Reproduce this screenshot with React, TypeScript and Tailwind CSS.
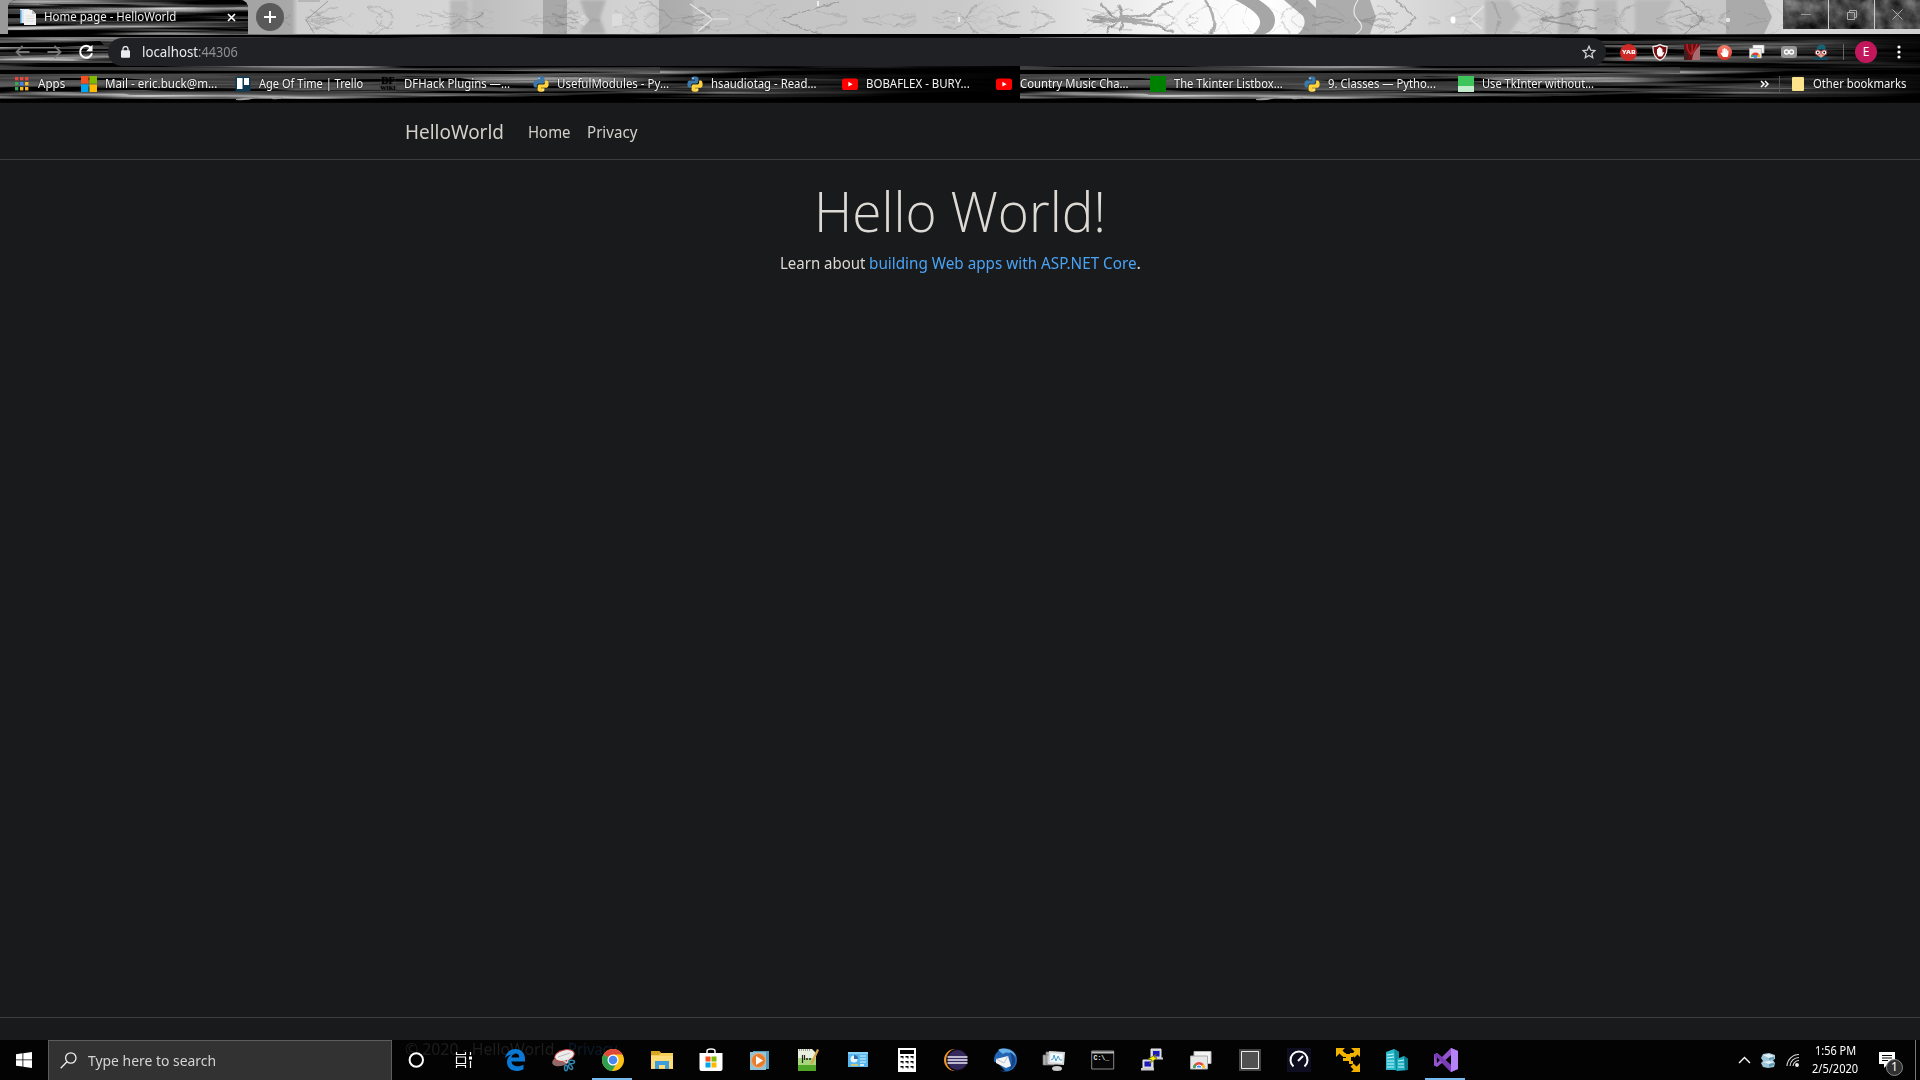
import React, { useLayoutEffect, useRef, useState } from 'react';
import { FaHandPaper } from 'react-icons/fa';

/** Text squeezed or stretched horizontally to an exact width. */
function Fit({ w, className = '', children }: { w: number; className?: string; children: React.ReactNode }) {
  const ref = useRef<HTMLSpanElement>(null);
  const [scale, setScale] = useState(1);
  useLayoutEffect(() => {
    if (ref.current) setScale(w / ref.current.offsetWidth);
  }, [w]);
  return (
    <span className={`inline-block shrink-0 whitespace-nowrap ${className}`} style={{ width: w }}>
      <span ref={ref} className="inline-block origin-left whitespace-nowrap" style={{ transform: `scaleX(${scale})` }}>
        {children}
      </span>
    </span>
  );
}

function makeRandom(seed: number) {
  let s = seed;
  return () => {
    s = (s * 16807) % 2147483647;
    return s / 2147483647;
  };
}

const rnd = makeRandom(4219);
const STREAKS = Array.from({ length: 90 }, (_, i) => {
  const x = rnd() * 1020 - 100;
  const y = rnd() * 104;
  const len = 70 + rnd() * 260;
  const h = 1 + rnd() * 2.6;
  const bend = (rnd() - 0.5) * 4;
  const shades = ['#000', '#4f4f4f', '#000', '#464646', '#5c5c5c', '#333'];
  return {
    d: `M${x.toFixed(1)} ${y.toFixed(1)}q${(len / 2).toFixed(1)} ${(bend - h).toFixed(1)} ${len.toFixed(1)} ${(bend / 2).toFixed(1)}q${(-len / 2).toFixed(1)} ${(h + 1).toFixed(1)} ${(-len).toFixed(1)} ${(-bend / 2).toFixed(1)}z`,
    fill: shades[i % 6],
    o: 0.5 + rnd() * 0.4,
  };
});

function Wood() {
  return (
    <svg className="absolute inset-0 h-full w-full" viewBox="0 0 1920 104" preserveAspectRatio="none">
      <defs>
        <filter id="grain" x="0" y="0" width="1" height="1" colorInterpolationFilters="sRGB">
          <feTurbulence type="fractalNoise" baseFrequency=".0045 .16" numOctaves="3" seed="11" />
          <feColorMatrix values="1.9 0 0 0 -.77 1.9 0 0 0 -.77 1.9 0 0 0 -.77 0 0 0 0 1" />
        </filter>
        <linearGradient id="wood-fade">
          <stop offset=".6" stopColor="#000" stopOpacity="0" />
          <stop offset=".9" stopColor="#000" stopOpacity=".9" />
          <stop offset="1" stopColor="#000" />
        </linearGradient>
        <g id="wood-tile">
          <rect width="1020" height="104" fill="#222" />
          <rect width="1020" height="104" filter="url(#grain)" />
          {STREAKS.map((s, i) => (
            <path key={i} d={s.d} fill={s.fill} opacity={s.o} />
          ))}
          <path d="M0 67h150l280 1 230-1v6l-100 3-100 1-60-1 60 8 60 5-90 2-220-3-210-2z" fill="#4a4a4a" opacity=".75" />
          <path d="M0 82h130l80 2 200-2-60 3H0zM120 92l150-1 260 3-180 2-220-1z" fill="#5a5a5a" opacity=".7" />
          <path d="M0 70h60l220 1 110-1 250 2-130 2-190-1-320 1zM60 78h60l30 2H60zM300 80l160-2 20 3-160 1zM0 88h90l50 2H0zM0 99h300l200-2 130 2 390-2v7H0zM0 35h400l620-1v3H0zM0 43h70l30-2 4 4-44 2H0z" fill="#000" />
          <path d="M0 61h120v2H0zM60 47h50v2H60z" fill="#444" />
          <path d="M236 99q12-2 19-1-8 3-19 2zM272 98q10-2 12-1-4 3-12 2z" fill="#999" />
          <rect y="34" width="1020" height="70" fill="url(#wood-fade)" />
        </g>
      </defs>
      <use href="#wood-tile" />
      <svg x="1020" width="900" height="104" viewBox="0 0 900 104">
        <use href="#wood-tile" />
      </svg>
      <rect y="102" width="1920" height="2" fill="#050505" />
    </svg>
  );
}

const trees = makeRandom(77);
const BRANCHES = Array.from({ length: 110 }, () => {
  const x = 290 + trees() * 1490;
  const w = (8 + trees() * 26) * (trees() > 0.5 ? 1 : -1);
  const y = 1 + trees() * 17;
  const c = 5 - trees() * 10;
  return {
    d: `M${x.toFixed(0)} ${(20 - y).toFixed(1)}q${(w * 0.4).toFixed(1)} ${c.toFixed(1)} ${w.toFixed(1)} ${(y - 1).toFixed(1)}M${x.toFixed(0)} ${(20 + y).toFixed(1)}q${(w * 0.4).toFixed(1)} ${(-c).toFixed(1)} ${w.toFixed(1)} ${(1 - y).toFixed(1)}`,
    sw: 0.5 + trees() * 1.2,
    o: 0.1 + trees() * 0.2,
  };
});

function Forest() {
  return (
    <svg className="absolute inset-0 h-full w-full" viewBox="0 0 1920 34" preserveAspectRatio="none">
      <defs>
        <linearGradient id="sky">
          <stop offset="0" stopColor="#999" />
          <stop offset=".14" stopColor="#a5a5a5" />
          <stop offset=".152" stopColor="#a9a9a9" />
          <stop offset=".155" stopColor="#cfcfcf" />
          <stop offset=".24" stopColor="#d6d6d6" />
          <stop offset=".247" stopColor="#bdbdbd" />
          <stop offset=".28" stopColor="#c8c8c8" />
          <stop offset=".335" stopColor="#d4d4d4" />
          <stop offset=".343" stopColor="#cacaca" />
          <stop offset=".3431" stopColor="#ababab" />
          <stop offset=".36" stopColor="#b0b0b0" />
          <stop offset=".362" stopColor="#c2c2c2" />
          <stop offset=".5" stopColor="#c9c9c9" />
          <stop offset=".55" stopColor="#dcdcdc" />
          <stop offset=".6" stopColor="#f3f3f3" />
          <stop offset=".66" stopColor="#fff" />
          <stop offset=".72" stopColor="#dedede" />
          <stop offset=".765" stopColor="#d0d0d0" />
          <stop offset=".9" stopColor="#c6c6c6" />
          <stop offset=".93" stopColor="#d8d8d8" />
          <stop offset="1" stopColor="#cfcfcf" />
        </linearGradient>
        <filter id="mist"><feGaussianBlur stdDeviation="1.4" /></filter>
        <filter id="twist" x="0" y="-.2" width="1" height="1.4">
          <feTurbulence type="fractalNoise" baseFrequency=".09" numOctaves="2" seed="3" result="n" />
          <feDisplacementMap in="SourceGraphic" in2="n" scale="7" xChannelSelector="R" yChannelSelector="G" />
          <feGaussianBlur stdDeviation=".35" />
        </filter>
      </defs>
      <rect width="1920" height="34" fill="url(#sky)" />
      <g filter="url(#mist)" fill="#a6a6a6">
        <rect x="450" width="18" height="34" fill="#b9b9b9" />
        <path d="M580 0h26l-6 18 6 16h-26l6-16zM1560 0h20l-7 17 7 17h-22z" fill="#b0b0b0" />
        <path d="M1635 0h38l-10 17 10 17h-38zM1485 0h24l12 17-12 17h-24zM1595 0h22v34h-22z" fill="#b8b8b8" />
      </g>
      <rect x="543" width="24" height="34" fill="#a8a8a8" />
      <path d="M1726 0h38l8 17-8 17h-38z" fill="#aaa" />
      <path d="M1235 0h24q16 10 16 20t-10 14h-12q10-8 6-16t-24-18zM1284 0h24l8 8v26h-18q10-9 5-18z" fill="#a6a6a6" />
      <path d="M1316 0h54l6 17-6 17h-54z" fill="#acacac" />
      <g fill="none" stroke="#666" filter="url(#twist)">
        <path d="M0-6h1920M0 40h1920" stroke="none" />
        {BRANCHES.map((b, i) => (
          <path key={i} d={b.d} strokeWidth={b.sw} opacity={b.o} />
        ))}
        <path d="M1086 20h66M1092 16l26 4-26 3M1102 2l8 12 10 6-12 12M1120 18l28-3 24-14M1122 21l30 3 22 8M1118 4q8 12 2 28M1205 0q14 20 5 34" strokeWidth="2.400" opacity=".5" />
        <path d="M1396 0l20 18-20 16M1540 20l58-12M1540 20l58 9M1680 0l22 20-20 14M780 19l60-18M782 21l40 13" strokeWidth="1.300" opacity=".45" />
      </g>
      <path d="M320 1l-22 0M328 1l-22 19 8 13" fill="none" stroke="#888" opacity=".8" strokeWidth=".9" />
      <path d="M1484 6l-14 13 12 10M690 4l22 15h16M712 20l-14 11M1358 0q-8 12 0 20t-2 14" fill="none" stroke="#e6e6e6" strokeWidth="1.200" />
      <path d="M584 14l6 6-6 6-8-6zM612 14h10v12h-10z" fill="#e8e8e8" opacity=".5" />
      <ellipse cx="1453" cy="20" rx="2.500" ry="3.500" fill="#fff" />
      <circle cx="1728" cy="20" r="2.200" fill="#e6e6e6" />
      <path d="M818 1v5M959 17v5" stroke="#fff" strokeWidth="1.400" />
    </svg>
  );
}

const Python = () => (
  <svg width="16" height="16" viewBox="0 0 16 16">
    <path d="M7.800.4C4.400.4 4.600 1.800 4.600 1.800v2h3.500v.6H2.800S.4 4.100.4 7.900s2.100 3.600 2.100 3.600h1.400V9.600s-.1-2.100 2.100-2.100h3.400s2 0 2-1.900V2.400S11.700.4 7.800.4z" fill="#3b78ab" />
    <path d="M8.200 15.700c3.400 0 3.200-1.500 3.200-1.500v-1.900H8v-.5h5.200s2.400.2 2.400-3.600-2.100-3.600-2.100-3.600h-1.400v1.900s.1 2.100-2.100 2.100H6.600s-2 0-2 1.900v3.200s-.3 2 3.600 2z" fill="#ffd43b" />
    <circle cx="6" cy="2.200" r=".7" fill="#fff" /><circle cx="10" cy="13.900" r=".7" fill="#fff" />
  </svg>
);
const YouTube = () => (
  <svg width="16" height="16" viewBox="0 0 16 16"><rect y="2.500" width="16" height="11.500" rx="2.600" fill="#f00" /><path d="M6.400 5.800v4.800l4.200-2.400z" fill="#fff" /></svg>
);
const Apps = () => (
  <svg width="14" height="14" viewBox="0 0 14 14">
    {['#e8453c', '#e8453c', '#e8453c', '#34a853', '#4285f4', '#f9bb2d', '#34a853', '#f9bb2d', '#f9bb2d'].map((c, i) => (
      <rect key={i} x={(i % 3) * 5} y={Math.floor(i / 3) * 5} width="3.400" height="3.400" fill={c} />
    ))}
  </svg>
);
const Microsoft = () => (
  <svg width="16" height="16" viewBox="0 0 16 16"><path d="M0 0h7.600v7.600H0z" fill="#f25022" /><path d="M8.400 0H16v7.600H8.400z" fill="#7fba00" /><path d="M0 8.400h7.600V16H0z" fill="#00a4ef" /><path d="M8.400 8.400H16V16H8.400z" fill="#ffb900" /></svg>
);
const Trello = () => (
  <svg width="16" height="16" viewBox="0 0 16 16"><rect x=".5" y=".5" width="15" height="15" rx="2" fill="#0c3953" /><path d="M2 2h5.500v11H2zM9 2h5v7H9z" fill="#fff" /></svg>
);
const Df = () => (
  <div className="flex h-4 w-4 flex-col items-center bg-white/5 font-['Liberation_Serif'] text-[10px] font-bold leading-[9px] text-black">
    <span>DF</span><span className="text-[6px] leading-[6px]">WIKI</span>
  </div>
);

const BOOKMARKS: { icon: React.ReactNode; label: string; w: number; slot: string }[] = [
  { icon: <Microsoft />, label: 'Mail - eric.buck@m...', w: 112, slot: 'w-[154px]' },
  { icon: <Trello />, label: 'Age Of Time | Trello', w: 104, slot: 'w-[145px]' },
  { icon: <Df />, label: 'DFHack Plugins —...', w: 106, slot: 'w-[153px]' },
  { icon: <Python />, label: 'UsefulModules - Py...', w: 112, slot: 'w-[154px]' },
  { icon: <Python />, label: 'hsaudiotag - Read...', w: 106, slot: 'w-[155px]' },
  { icon: <YouTube />, label: 'BOBAFLEX - BURY...', w: 104, slot: 'w-[154px]' },
  { icon: <YouTube />, label: 'Country Music Cha...', w: 109, slot: 'w-[154px]' },
  { icon: <div className="h-4 w-4 bg-[#008000]" />, label: 'The Tkinter Listbox...', w: 109, slot: 'w-[154px]' },
  { icon: <Python />, label: '9. Classes — Pytho...', w: 108, slot: 'w-[154px]' },
  { icon: <div className="h-4 w-4 border-b-[6px] border-[#c3ecce] bg-[#3dc55c]" />, label: 'Use TkInter without...', w: 112, slot: 'w-[154px]' },
];

function TabStrip() {
  return (
    <div className="relative flex h-[34px] overflow-hidden">
      <div className="absolute inset-0"><Forest /></div>
      <div className="relative ml-2 flex h-[34px] w-[240px] items-center overflow-hidden rounded-t-lg pl-3">
        <div className="absolute -left-2 top-0 h-[104px] w-[1920px]"><Wood /></div>
        <svg className="relative" width="16" height="16" viewBox="0 0 16 16">
          <path d="M0 0h9l2 2v12H0z" fill="#d5e7f2" /><path d="M0 1h1.500v13H0z" fill="#5b9fcd" /><path d="M4 1h8l4 4v11H4z" fill="#f2f2f2" /><path d="M12 1v4h4z" fill="#bbb" /><path d="M6 7h8M6 9.500h8M6 12h8" stroke="#dcdcdc" />
        </svg>
        <Fit w={132} className="relative ml-2 text-[12px] leading-4 text-[#eee]">Home page - HelloWorld</Fit>
        <svg className="relative ml-[51px]" width="9" height="9" viewBox="0 0 9 9"><path d="M1 1l7 7M8 1L1 8" stroke="#fff" strokeWidth="1.700" /></svg>
      </div>
      <div className="relative ml-2 mt-[3px] flex h-7 w-7 items-center justify-center rounded-full bg-[#5a5a5a]">
        <svg width="12" height="12" viewBox="0 0 12 12"><path d="M6 0v12M0 6h12" stroke="#fff" strokeWidth="2" /></svg>
      </div>
      <div className="relative ml-auto flex h-[29px] w-[137px] bg-[#484848]">
        <svg className="absolute inset-0" width="137" height="29">
          <defs><filter id="grit" x="0" y="0" width="1" height="1" colorInterpolationFilters="sRGB"><feTurbulence type="fractalNoise" baseFrequency=".06" numOctaves="5" seed="5" /><feColorMatrix values=".6 0 0 0 -.02 .6 0 0 0 -.02 .6 0 0 0 -.02 0 0 0 0 1" /></filter></defs>
          <rect width="137" height="29" filter="url(#grit)" />
        </svg>
        <div className="relative flex w-[46px] items-center justify-center border-r border-[#ccc]"><div className="h-px w-[10px] bg-[#999]" /></div>
        <div className="relative flex w-[46px] items-center justify-center border-r border-[#ccc]">
          <svg width="10" height="10" viewBox="0 0 10 10" fill="none" stroke="#aaa"><path d="M.5 2.500h7v7h-7zM2.500 2.500v-2h7v7h-2" /></svg>
        </div>
        <div className="relative flex w-[45px] items-center justify-center">
          <svg width="11" height="11" viewBox="0 0 11 11"><path d="M.5.5l10 10M10.500.5l-10 10" stroke="#aaa" /></svg>
        </div>
      </div>
    </div>
  );
}

function Extensions() {
  return (
    <div className="ml-[14px] flex items-center">
      <div className="flex w-8 items-center"><div className="flex h-[17px] w-[17px] items-center justify-center rounded-full bg-[#cf2a27] text-[6px] font-extrabold text-white"><Fit w={14}>YAB</Fit></div></div>
      <div className="flex w-8">
        <svg width="16" height="17" viewBox="0 0 16 17"><path d="M8 .6q3.500 1.800 7 2c.3 7-1.600 10.900-7 13.700C2.600 13.500.7 9.600 1 2.600q3.500-.2 7-2z" fill="#7a0e10" stroke="#eee" strokeWidth="1.200" /><path d="M5 8V5h1V3.800h1.200V3h1.200v1h1.200v1.200h.9V9l1-1 .8.600L10 12.500H6.500L5 10z" fill="#fff" /></svg>
      </div>
      <div className="flex w-[33px]">
        <svg width="16" height="16" viewBox="0 0 16 16"><path d="M0 0h16v16H0z" fill="#6b0f12" /><path d="M0 5l4 5-1 6H0z" fill="#382020" /><path d="M3 0q0 7 4 10M8 0q1 6-1 11M13 0q-2 7-6 11" stroke="#b5262a" strokeWidth="1.400" fill="none" /><path d="M16 1v15H8q0-7 8-15z" fill="#a66d70" /></svg>
      </div>
      <div className="flex w-8"><div className="flex h-[15px] w-[15px] items-center justify-center rounded-full bg-gradient-to-b from-[#f58070] to-[#d6291e] text-white"><FaHandPaper size={9} /></div></div>
      <div className="flex w-8">
        <svg width="16" height="14" viewBox="0 0 16 14"><path d="M4 0h11v8H4z" fill="#f8f8f8" stroke="#bbb" strokeWidth=".7" /><path d="M.4 3.500h12V13H.4z" fill="#eee" stroke="#aaa" strokeWidth=".7" /><path d="M2 12a4.500 4.500 0 0 1 9 0z" fill="#e33b2e" /><path d="M2 12a4.500 4.500 0 0 1 1-3l3 3z" fill="#3cab55" /><path d="M11 12a4.500 4.500 0 0 0-1-3L7 12z" fill="#fbc116" /><circle cx="6.500" cy="11.500" r="1.800" fill="#4285f4" /></svg>
      </div>
      <div className="flex w-8">
        <svg width="16" height="12" viewBox="0 0 16 12"><rect width="16" height="12" rx="3" fill="#969696" /><circle cx="5.500" cy="6" r="2" fill="none" stroke="#fff" strokeWidth="1.300" /><circle cx="10.500" cy="6" r="2" fill="none" stroke="#fff" strokeWidth="1.300" /></svg>
      </div>
      <svg width="16" height="16" viewBox="0 0 16 16"><path d="M4 6C3 2 6 .5 9 .5s4 2 3.500 5.500z" fill="#176273" /><path d="M2 5h12v1.500H2z" fill="#0c4454" /><path d="M4 7h8v4l-4 3-4-3z" fill="#e3a58e" /><circle cx="4.800" cy="8.500" r="2.600" fill="#fff" stroke="#b33b34" strokeWidth="1" /><circle cx="11.200" cy="8.500" r="2.600" fill="#fff" stroke="#b33b34" strokeWidth="1" /><circle cx="4.800" cy="8.500" r=".9" /><circle cx="11.200" cy="8.500" r=".9" /><path d="M1 16c0-3 3-4 5-3l2 1 2-1c3-1 5 0 5 3z" fill="#134c60" /></svg>
    </div>
  );
}

function Toolbar() {
  return (
    <div className="relative flex h-9 items-center">
      <svg className="ml-[15px]" width="15" height="14" viewBox="0 0 15 14" fill="none" stroke="#777" strokeWidth="1.800"><path d="M14.500 7H1.500M7.500 1l-6 6 6 6" /></svg>
      <svg className="ml-[17px]" width="15" height="14" viewBox="0 0 15 14" fill="none" stroke="#777" strokeWidth="1.800"><path d="M.5 7h13M7.500 1l6 6-6 6" /></svg>
      <svg className="ml-[16px]" width="16" height="16" viewBox="0 0 16 16"><path d="M12.800 4A6 6 0 1 0 14 9.300" fill="none" stroke="#fff" strokeWidth="2" /><path d="M14.500.8v6.400H8.200z" fill="#fff" /></svg>
      <div className="ml-[14px] flex h-7 w-[1498px] items-center rounded-full bg-[#202124]">
        <svg className="ml-[13px]" width="9" height="12" viewBox="0 0 9 12"><path d="M2 5V3a2.500 2.500 0 0 1 5 0v2" fill="none" stroke="#e8eaed" strokeWidth="1.300" /><rect y="4.300" width="9" height="7.500" rx="1" fill="#e8eaed" /></svg>
        <Fit w={56} className="ml-3 text-[14px] leading-5 text-[#e8eaed]">localhost</Fit>
        <Fit w={40} className="text-[14px] leading-5 text-[#8d9094]">:44306</Fit>
        <svg className="ml-auto mr-[10px]" width="14" height="14" viewBox="0 0 14 14"><path d="M7 1.200l1.700 4 4.300.4-3.200 2.900.9 4.200L7 10.500l-3.700 2.200.9-4.200L1 5.600l4.300-.4z" fill="none" stroke="#d0d1d3" strokeWidth="1.300" /></svg>
      </div>
      <Extensions />
      <div className="ml-[14px] h-4 w-px bg-[#666]" />
      <div className="ml-[11px] flex h-[22px] w-[22px] items-center justify-center rounded-full bg-[#c2185b] text-[12px] text-white">E</div>
      <svg className="ml-5" width="4" height="14" viewBox="0 0 4 14" fill="#fff"><circle cx="2" cy="2" r="1.600" /><circle cx="2" cy="7" r="1.600" /><circle cx="2" cy="12" r="1.600" /></svg>
    </div>
  );
}

function BookmarksBar() {
  return (
    <div className="relative flex h-[28px] items-center text-[12px] leading-4 text-[#f5f5f5] [text-shadow:0_0_2px_#000]">
      <div className="ml-[15px] flex w-[66px] items-center gap-[9px]"><Apps /><Fit w={27}>Apps</Fit></div>
      {BOOKMARKS.map((b) => (
        <div key={b.label} className={`flex shrink-0 items-center gap-2 ${b.slot}`}>{b.icon}<Fit w={b.w}>{b.label}</Fit></div>
      ))}
      <svg className="ml-auto" width="9" height="8" viewBox="0 0 9 8" fill="none" stroke="#fff" strokeWidth="1.500"><path d="M1 1l3 3-3 3M5 1l3 3-3 3" /></svg>
      <div className="ml-[10px] h-4 w-px bg-[#555]" />
      <div className="ml-3 h-[14px] w-3 rounded-[1px] bg-[#fce28a]" />
      <Fit w={93} className="ml-[9px] mr-[14px]">Other bookmarks</Fit>
    </div>
  );
}

const I = ({ children, w = 24, h = 24 }: { children: React.ReactNode; w?: number; h?: number }) => (
  <svg width={w} height={h} viewBox={`0 0 ${w} ${h}`}>{children}</svg>
);

const ChromeIcon = () => (
  <I><circle cx="12" cy="12" r="11" fill="#fbc116" /><path d="M12 12L2.500 6.500A11 11 0 0 1 21.500 6.500H12z" fill="#e0483b" /><path d="M12 12L2.500 6.500A11 11 0 0 0 11 23l5-8.500z" fill="#2f9e4f" /><circle cx="12" cy="12" r="5.500" fill="#fff" /><circle cx="12" cy="12" r="4.300" fill="#4a86ef" /></I>
);

const TASKS: { active?: boolean; icon: React.ReactNode }[] = [
  { icon: <I><circle cx="11.300" cy="12" r="6.700" fill="none" stroke="#fff" strokeWidth="2" /></I> },
  { icon: <I><path d="M2.500 4v2.500h9V4M2.500 20v-2.500h9V20M2.500 9h9v6.500h-9zM16.500 4v3M16.500 13v7" fill="none" stroke="#fff" strokeWidth="1.200" /><path d="M15 8.500h3v3h-3z" fill="#fff" /></I> },
  { icon: <I><path d="M2 10.500C3 4.500 7 1 12.500 1 18.500 1 22 5.500 22 10.500V13.500H8.500c.4 3.300 3 4.700 6 4.700 2.300 0 4.500-.6 6-1.500v4.500c-2 1.200-4.500 1.800-7 1.800C7.500 23 4 19 4 14c0-3.500 1.800-6 4.500-7.500C5.500 7 3.500 8.500 2 10.500zM8.500 9.500h7.700c0-2.500-1.200-4-3.500-4s-4 1.700-4.200 4z" fill="#0b78d4" /></I> },
  { icon: <I><ellipse cx="9" cy="13" rx="9" ry="5" transform="rotate(-14 9 13)" fill="#8f6868" /><ellipse cx="12.500" cy="7.500" rx="10" ry="5.500" transform="rotate(-14 12.500 7.500)" fill="#ececec" stroke="#c94040" strokeWidth="1" /><path d="M6 9l12-4" stroke="#bbb" /><path d="M9 11l6 4M17 9l-2 6" stroke="#ddd" strokeWidth="1.300" /><g fill="none" stroke="#3185ae" strokeWidth="1.500"><ellipse cx="19.500" cy="14" rx="3" ry="1.700" /><ellipse cx="18.500" cy="19" rx="1.600" ry="2.700" transform="rotate(-35 18.500 19)" /><ellipse cx="14" cy="20" rx="1.500" ry="2.700" /></g></I> },
  { active: true, icon: <ChromeIcon /> },
  { icon: <I><path d="M1 3h8l2 2h12v16H1z" fill="#f5ce5c" /><path d="M1 3h8l2 2-2 2H1z" fill="#d9a520" /><path d="M1 8h22v12H1z" fill="#fbdc78" /><path d="M5 21v-8h14v8h-4v-4H9v4z" fill="#3e9edb" /></I> },
  { icon: <I><path d="M8 5V3q0-2 4-2t4 2v2" fill="none" stroke="#fff" strokeWidth="1.500" /><path d="M.5 5h23v16q0 2-2 2h-19q-2 0-2-2z" fill="#fff" /><path d="M6.500 8.500h5v5h-5z" fill="#f25022" /><path d="M12.500 8.500h5v5h-5z" fill="#7fba00" /><path d="M6.500 14.500h5v5h-5z" fill="#00a4ef" /><path d="M12.500 14.500h5v5h-5z" fill="#ffb900" /></I> },
  { icon: <I><path d="M5 3h16v18H5z" fill="#5a9bbd" /><path d="M2 4h16v18H2z" fill="#8ec3d8" /><circle cx="10.500" cy="12.500" r="7" fill="#e97b2c" stroke="#f3ad75" /><path d="M8 8v9l7-4.500z" fill="#fff" /></I> },
  { icon: <I><path d="M1 1h14l4 4v18H1z" fill="#e8efdc" /><path d="M1 15h18v8H1z" fill="#4fa528" /><path d="M1 10h18v7H1z" fill="#a6d87b" /><path d="M2 2h12" stroke="#888" strokeDasharray="1 1" strokeWidth="1.500" /><path d="M5.500 7v8M7.500 7v5" stroke="#222" strokeWidth="1.200" /><path d="M9 11h2M12 11h2" stroke="#222" strokeWidth="1.500" /><path d="M20 1l-6 13-1 4 3-3L22 2z" fill="#d9a34a" /></I> },
  { icon: <I><path d="M2 4h20v15H2z" fill="#55b7ed" /><path d="M2 4h20v2H2z" fill="#89d3f8" /><circle cx="8" cy="11" r="3.500" fill="#e8f5ff" /><path d="M8 11V7a4 4 0 0 1 4 4z" fill="#326ca8" /><path d="M14 8h6M14 11h6M14 14h6" stroke="#dff3ff" /><path d="M5 17h7" stroke="#f2cd52" strokeWidth="1.500" /><path d="M14 17h4" stroke="#fff" strokeWidth="1.500" /></I> },
  { icon: <I><path d="M3 0h18v24H3z" fill="#fff" /><path d="M5 2h14v4H5z" />{[9, 14, 19].map((y) => [5.5, 10.5, 15.5].map((x) => <path key={`${x}${y}`} d={`M${x} ${y - 1}h3v2.500h-1v-1h-2z`} />))}</I> },
  { icon: <I><circle cx="11" cy="12" r="11" fill="#f1942a" /><circle cx="13.500" cy="12" r="11.300" fill="#0a0710" /><circle cx="13.500" cy="12" r="10" fill="#35285c" /><path d="M3.500 9h20M3.500 12h20M3.500 15h20" stroke="#eae7f4" strokeWidth="1.600" /></I> },
  { icon: <I><circle cx="12.500" cy="12" r="11.500" fill="#2165b3" /><path d="M5 2c7-4 17 1 18 7-3-4-9-6-13-3z" fill="#69b2e7" /><path d="M17 4c7 4 7 13-1 18 3-5 4-10 1-18z" fill="#174183" /><path d="M0 14l4 0 8 9q-10 0-12-9z" fill="#030303" /><path d="M3 11l12-3 3 10-5 2-10-5z" fill="#f3f4f6" /><path d="M3 11l8 4 4-7" fill="none" stroke="#bdc4cf" /></I> },
  { icon: <I><path d="M1 7h11v10H1zM4 4h10v12H4z" fill="#b0b2b3" stroke="#777" strokeWidth=".7" /><path d="M7 3l16 1-1 13-16-1z" fill="#d7d9da" /><path d="M8.500 5l12.500 1-1 9-12-1z" fill="#f2fafd" /><path d="M9 12l2-1 1-4 2 6 2-5 2 4h2" fill="none" stroke="#4ba0cb" /><ellipse cx="15" cy="20.500" rx="5" ry="2.500" fill="#ccc" /></I> },
  { icon: <I><path d="M.7 3h22v18H.7z" fill="#060606" stroke="#888" /><path d="M1 3.500h22v2H1z" fill="#bbb" /><text x="2.500" y="12" fill="#eee" fontFamily="Liberation Mono" fontWeight="bold" fontSize="6.500">C:\_</text></I> },
  { icon: <I><path d="M11 1h10v9H11zM3 12h10v8H3z" fill="#ccc" stroke="#eee" /><path d="M13 3h6.500v5.500H13zM4.500 13.500H11v5H4.500z" fill="#1919c4" /><path d="M11 9.500h12v2H11zM1 20h13v2.500H1z" fill="#ccc" /><path d="M17 6l-9 5 4 1-3 4 8-6-3-1z" fill="#f8f000" stroke="#555000" strokeWidth=".6" /></I> },
  { icon: <I><path d="M5 3.500h17v12H5z" fill="#f4f4f4" stroke="#b5b5b5" /><path d="M1.500 8h17v13h-17z" fill="#e7e7e7" stroke="#aaa" /><path d="M4 20a6 6 0 0 1 12 0z" fill="#e44b3f" /><path d="M4 20a6 6 0 0 1 1.500-4l4.500 4z" fill="#38a655" /><path d="M16 20a6 6 0 0 0-1.500-4L10 20z" fill="#fbc116" /><path d="M7 20a3 3 0 0 1 6 0z" fill="#4285f4" stroke="#fff" /></I> },
  { icon: <I><path d="M1 1h22v22H1z" fill="#424242" /><path d="M3.500 3.500h17v17h-17z" fill="#505050" stroke="#eee" /></I> },
  { icon: <I><path d="M0 0h24v24H0z" fill="#0d0e20" /><path d="M6.500 18.500a8.500 8.500 0 1 1 11 0" fill="none" stroke="#fff" strokeWidth="2" /><path d="M11 13l5-5" stroke="#fff" strokeWidth="2" /></I> },
  { icon: <I><g fill="#f2b200"><path d="M0 0h9L6.500 2.500l3 3-3 3-3-3L0 9zM24 0v9l-2.500-2.500-3 3-3-3 3-3L15 0zM24 24h-9l2.500-2.500-3-3 3-3 3 3L24 15z" /><path d="M7 5h3v1h4V5h3v4h-2v4h2v3h-4v-3H7v-3h3V9H7z" /></g></I> },
  { icon: <I><path d="M1 4l8-3 5 3v18H1z" fill="#28b9cb" /><path d="M9 1l5 3v18l-3 1z" fill="#128f9f" /><path d="M2 7l7-1M2 10l7-1M2 13h7M2 16h7M2 19h7" stroke="#caf8fc" strokeWidth="1.200" /><path d="M12 11l7-3 4 3v11l-11 1z" fill="#1fafc1" /><path d="M19 8l4 3v11h-3z" fill="#087886" /><path d="M13 13l6-1M13 16h6M13 19h6" stroke="#caf8fc" /></I> },
  { active: true, icon: <I><path d="M17 0l7 3v18l-7 3-9-9-5 4-3-1.500v-11L3 5l5 4zM17 7l-5.500 5 5.500 5zM3 9v6l3-3z" fill="#9255cb" fillRule="evenodd" /><path d="M17 0l7 3v18l-7 3z" fill="#b583f5" /><path d="M0 6.500L3 5l14 12v7L3 9v6z" fill="#7a3cb5" /></I> },
];

function Taskbar() {
  return (
    <div className="relative flex h-10 w-full shrink-0 bg-[#030303]">
      <div className="absolute left-[405px] top-[-3px] text-[16px] leading-6 text-[#1d1d1f]">
        <Fit w={163}>© 2020 - HelloWorld -&nbsp;</Fit><Fit w={49} className="text-[#0b1b2a]">Privacy</Fit>
      </div>
      <div className="flex w-12 items-center justify-center">
        <svg width="16" height="16" viewBox="0 0 16 16" fill="#fff"><path d="M0 2.200l6.500-.9v6.200H0zM7.300 1.200L16 0v7.500H7.300zM0 8.300h6.500v6.300L0 13.700zM7.300 8.300H16V16l-8.700-1.200z" /></svg>
      </div>
      <div className="flex w-[344px] items-center border border-b-0 border-[#5c5c5c] bg-[#323232]">
        <svg className="ml-[11px]" width="17" height="17" viewBox="0 0 17 17"><circle cx="10.800" cy="6" r="5.200" fill="none" stroke="#eee" strokeWidth="1.300" /><path d="M7 9.700L.7 16.200" stroke="#eee" strokeWidth="1.300" /></svg>
        <Fit w={128} className="mb-0.5 ml-[11px] text-[15px] leading-5 text-[#d4d4d4]">Type here to search</Fit>
      </div>
      {TASKS.map((t, i) => (
        <div key={i} className="relative flex w-[49px] shrink-0 items-center justify-center">
          {t.icon}
          {t.active && <div className="absolute bottom-0 left-1 h-0.5 w-10 bg-[#76b9ed]" />}
        </div>
      ))}
      <div className="ml-auto flex items-center text-white">
        <svg width="13" height="8" viewBox="0 0 13 8"><path d="M1 7l5.500-5.500L12 7" fill="none" stroke="#fff" strokeWidth="1.400" /></svg>
        <svg className="ml-[10px]" width="14" height="15" viewBox="0 0 14 15"><path d="M2 1l6-1 6 2v4l-2 1 2 3-1 4-6 1-5-1-2-4 2-2-2-3z" fill="#9fc6d8" /><path d="M2 2l6-1 5 2-5 2zM2 9l6-1 5 1-5 2z" fill="#e2f1f6" /><path d="M8 5l5-1v2l-5 1zM8 11l5-1v2l-5 2z" fill="#5d9bb8" /></svg>
        <svg className="ml-[11px]" width="14" height="14" viewBox="0 0 14 14" fill="none" stroke="#ddd" strokeWidth="1.100"><path d="M1 13A12 12 0 0 1 13 1.500M4 13a9 9 0 0 1 9-8.500M7 13a6 6 0 0 1 6-5.500" /><circle cx="11" cy="12" r="1.400" fill="#fff" /></svg>
        <div className="mb-px ml-3 flex w-[46px] flex-col items-center text-[12px] leading-[18px]"><Fit w={41}>1:56 PM</Fit><Fit w={46}>2/5/2020</Fit></div>
        <div className="relative ml-[21px] mr-[19px] h-[17px] w-[17px]">
          <svg width="17" height="17" viewBox="0 0 17 17"><path d="M0 0h16v12H9l-4 4v-4H0z" fill="#fff" /><path d="M3 3.500h10M3 6h10M3 8.500h6" stroke="#000" strokeWidth="1.200" /></svg>
          <div className="absolute left-[7px] top-[7px] flex h-[17px] w-[17px] items-center justify-center rounded-full border border-[#888] bg-[#303030] text-[12px] leading-none">1</div>
        </div>
        <div className="mr-1 h-10 w-px bg-[#777]" />
      </div>
    </div>
  );
}

export default function App() {
  return (
    <div className="flex h-[1080px] w-[1920px] flex-col overflow-hidden bg-[#191a1c] font-['Noto_Sans','Open_Sans',sans-serif]">
      <header className="relative flex h-[103px] shrink-0 flex-col overflow-hidden">
        <div className="absolute left-0 top-0 h-[104px] w-[1920px]"><Wood /></div>
        <TabStrip />
        <Toolbar />
        <BookmarksBar />
      </header>
      <nav className="flex h-[57px] shrink-0 items-center border-b border-[#3b3d3f] pl-[405px] pt-0.5 text-[16px] leading-6 text-[#d3d0ca]">
        <Fit w={99} className="text-[19.5px] leading-[30px]">HelloWorld</Fit>
        <Fit w={43} className="ml-6">Home</Fit>
        <Fit w={50} className="ml-4">Privacy</Fit>
      </nav>
      <main className="flex grow flex-col items-center pt-[17px] text-[#dddad5]">
        <h1 className="h-[72px] font-['Open_Sans'] text-[55.5px] font-light leading-[68px]"><Fit w={292}>Hello World!</Fit></h1>
        <p className="mt-[2px] flex text-[16px] leading-6">
          <Fit w={89}>Learn about&nbsp;</Fit><Fit w={268} className="text-[#4ba3f5]">building Web apps with ASP.NET Core</Fit><Fit w={4}>.</Fit>
        </p>
      </main>
      <div className="h-[23px] shrink-0 border-t border-[#3b3d3f]" />
      <Taskbar />
    </div>
  );
}
